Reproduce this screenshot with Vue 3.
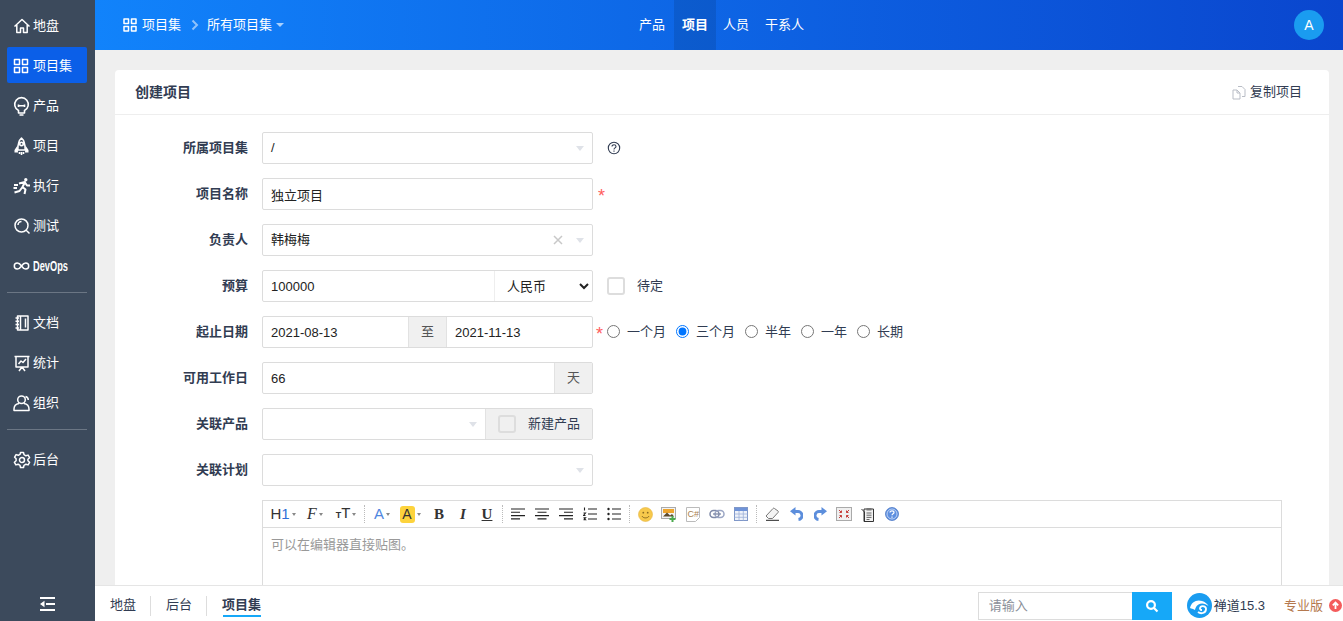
<template>
  <div class="app">
    <aside class="sidebar">
      <template v-for="group in menu" :key="group[0].name">
        <nav class="menu-group">
          <a v-for="item in group" :key="item.name" :class="['menu-item', { active: item.active }]">
            <svg class="menu-icon" viewBox="0 0 18 18">
              <path :d="item.d" :stroke-width="item.sw || 1.5" />
              <path v-if="item.solid" class="solid" :d="item.solid" />
            </svg>
            <span :class="{ devops: item.name === 'DevOps' }">{{ item.name }}</span>
          </a>
        </nav>
        <div v-if="group !== menu[menu.length - 1]" class="menu-divider"></div>
      </template>
      <div class="menu-toggle">
        <svg width="15" height="14" viewBox="0 0 15 14"><path d="M0 0h15v2H0zM6 6h9v2H6zM0 12h15v2H0zM4.500 3.800v6.400L0 7z" /></svg>
      </div>
    </aside>

    <div class="main">
      <header class="topbar">
        <div class="crumbs">
          <svg class="crumb-icon" viewBox="0 0 14 14"><path d="M1 1h4.500v4.500H1zM8.500 1H13v4.500H8.500zM1 8.500h4.500V13H1zM8.500 8.500H13V13H8.500z" /></svg>
          <span>项目集</span>
          <svg class="crumb-sep" width="8" height="12" viewBox="0 0 8 12"><path d="M1.500 1.500L6 6l-4.500 4.500" /></svg>
          <span>所有项目集</span>
          <i class="crumb-caret"></i>
        </div>
        <nav class="topnav">
          <a v-for="tab in tabs" :key="tab" :class="{ on: tab === '项目' }">{{ tab }}</a>
        </nav>
        <div class="avatar">A</div>
      </header>

      <div class="content">
        <section class="card">
          <div class="card-head">
            <strong>创建项目</strong>
            <a class="copy-link">
              <svg width="14" height="15" viewBox="0 0 14 15"><path d="M6 1.500h4l3 3v7h-3M1 5h4l3 3v6H1zM5 5v3h3" /></svg>
              复制项目
            </a>
          </div>

          <div class="form">
            <div class="row">
              <label>所属项目集</label>
              <div class="control select-box"><span>/</span><i class="caret"></i></div>
              <svg class="help" width="14" height="14" viewBox="0 0 14 14"><circle cx="7" cy="7" r="5.700" /><path d="M5 5.600C5 4.400 5.900 3.800 7 3.800S9 4.500 9 5.500C9 6.800 7 6.900 7 8.400" /><path d="M7 9.600v1.200" /></svg>
            </div>

            <div class="row">
              <label>项目名称</label>
              <div class="control"><input value="独立项目" /></div>
              <span class="required name-star">*</span>
            </div>

            <div class="row">
              <label>负责人</label>
              <div class="control select-box">
                <span class="val">韩梅梅</span>
                <svg class="clear" width="10" height="10" viewBox="0 0 10 10"><path d="M1 1l8 8M9 1l-8 8" /></svg>
                <i class="caret"></i>
              </div>
            </div>

            <div class="row">
              <label>预算</label>
              <div class="control group">
                <input class="budget" value="100000" />
                <select class="currency"><option>人民币</option></select>
              </div>
              <span class="check pending"><i class="box"></i>待定</span>
            </div>

            <div class="row">
              <label>起止日期</label>
              <div class="control group">
                <input class="date" value="2021-08-13" />
                <span class="addon to">至</span>
                <input class="date" value="2021-11-13" />
              </div>
              <span class="required date-star">*</span>
              <div class="radios">
                <label v-for="p in periods" :key="p">
                  <input type="radio" name="period" :checked="p === '三个月'" />{{ p }}
                </label>
              </div>
            </div>

            <div class="row">
              <label>可用工作日</label>
              <div class="control group">
                <input value="66" />
                <span class="addon day">天</span>
              </div>
            </div>

            <div class="row">
              <label>关联产品</label>
              <div class="control group">
                <div class="select-box inner"><i class="caret"></i></div>
                <span class="addon newprod"><i class="box"></i>新建产品</span>
              </div>
            </div>

            <div class="row">
              <label>关联计划</label>
              <div class="control select-box"><i class="caret"></i></div>
            </div>

            <div class="row editor-row">
              <label></label>
              <div class="editor">
                <div class="toolbar">
                  <span class="tb w32"><b class="tb-h">H<em>1</em></b><i class="mini"></i></span>
                  <span class="tb w32"><b class="tb-f">F</b><i class="mini"></i></span>
                  <span class="tb w30"><b class="tb-t"><small>T</small>T</b><i class="mini"></i></span>
                  <i class="tb-sep"></i>
                  <span class="tb w28"><b class="tb-a">A</b><i class="mini"></i></span>
                  <span class="tb w28 mr3"><b class="tb-hl">A</b><i class="mini"></i></span>
                  <span class="tb"><b class="tb-b">B</b></span>
                  <span class="tb"><b class="tb-i">I</b></span>
                  <span class="tb"><b class="tb-u">U</b></span>
                  <i class="tb-sep"></i>
                  <span class="tb"><svg class="lines" viewBox="0 0 14 12"><path d="M0 1h14M0 4.300h9M0 7.600h14M0 10.900h9" /></svg></span>
                  <span class="tb"><svg class="lines" viewBox="0 0 14 12"><path d="M0 1h14M2.500 4.300h9M0 7.600h14M2.500 10.900h9" /></svg></span>
                  <span class="tb"><svg class="lines" viewBox="0 0 14 12"><path d="M0 1h14M5 4.300h9M0 7.600h14M5 10.900h9" /></svg></span>
                  <span class="tb"><svg class="lines" viewBox="0 0 14 14"><path d="M5 2h9M5 7h9M5 12h9" /><path d="M1.500 .5v3M.5 6h2l-2 2.500h2M.5 10.800h2l-1 1 1 1h-2" stroke-width=".8" /></svg></span>
                  <span class="tb"><svg class="lines" viewBox="0 0 14 14"><path d="M5 2h9M5 7h9M5 12h9" /><circle cx="1.500" cy="2" r="1.200" /><circle cx="1.500" cy="7" r="1.200" /><circle cx="1.500" cy="12" r="1.200" /></svg></span>
                  <i class="tb-sep"></i>
                  <span class="tb">
                    <svg width="15" height="15" viewBox="0 0 15 15"><circle cx="7.500" cy="7.500" r="7" fill="#f7c94c" stroke="#e5b543" stroke-width=".6" /><circle cx="5.300" cy="5.700" r=".9" fill="#8a6a20" /><circle cx="9.700" cy="5.700" r=".9" fill="#8a6a20" /><path d="M4 9c1 2.500 6 2.500 7 0" fill="none" stroke="#8a6a20" /></svg>
                  </span>
                  <span class="tb">
                    <svg width="16" height="15" viewBox="0 0 16 15"><rect x=".5" y=".5" width="14" height="11" fill="#f3f3f3" stroke="#aaa" /><rect x="2" y="2" width="11" height="4" fill="#eda52e" /><path d="M2 9.500L6 5.500l3 3 2-1.500 2 2.500z" fill="#5c4a2c" /><path d="M11.500 9v6M8.500 12h6" stroke="#4daa4f" stroke-width="2" /></svg>
                  </span>
                  <span class="tb">
                    <svg width="14" height="15" viewBox="0 0 14 15"><path d="M.5.500h13v10l-4 4h-9z" fill="#fff" stroke="#bbb" /><text x="1.500" y="9.500" class="csharp">C#</text></svg>
                  </span>
                  <span class="tb">
                    <svg width="16" height="10" viewBox="0 0 16 10"><rect x="1" y="1.500" width="9" height="7" rx="3.500" fill="none" stroke="#7f8aa8" stroke-width="1.500" /><rect x="6" y="1.500" width="9" height="7" rx="3.500" fill="none" stroke="#9ba6c4" stroke-width="1.500" /><path d="M4 5h8" stroke="#7f8aa8" stroke-width="1.300" /></svg>
                  </span>
                  <span class="tb">
                    <svg width="14" height="14" viewBox="0 0 14 14"><rect x=".5" y=".5" width="13" height="13" fill="#eef2fa" stroke="#7f97c8" /><rect x="1" y="1" width="12" height="3" fill="#6f93d8" /><path d="M.5 7h13M.5 10.300h13M5 4v9.500M9.300 4v9.500" stroke="#9cb0d8" stroke-width=".8" /></svg>
                  </span>
                  <i class="tb-sep"></i>
                  <span class="tb">
                    <svg width="15" height="14" viewBox="0 0 15 14"><path d="M1 9l7-7.500c.5-.5 1-.5 1.500 0l3.500 2.500c.5.500.5 1 0 1.500L7.500 11.500H3.500z" fill="#f4f4f4" stroke="#777" /><path d="M1 13.300h13" stroke="#222" /></svg>
                  </span>
                  <span class="tb">
                    <svg width="13" height="15" viewBox="0 0 13 15"><path d="M3.500 4.500H7.500a3.800 3.800 0 0 1 1 8" fill="none" stroke="#5c8edc" stroke-width="3" /><path d="M5.500 0v8.500L0 4.300z" fill="#5c8edc" /></svg>
                  </span>
                  <span class="tb">
                    <svg width="13" height="15" viewBox="0 0 13 15"><path d="M9.500 4.500H5.500a3.800 3.800 0 0 0-1 8" fill="none" stroke="#5c8edc" stroke-width="3" /><path d="M7.500 0v8.500L13 4.300z" fill="#5c8edc" /></svg>
                  </span>
                  <span class="tb">
                    <svg width="16" height="14" viewBox="0 0 16 14"><rect x=".5" y=".5" width="15" height="13" fill="#f0f0f0" stroke="#aaa" /><path d="M3 3l2.500 2.500M13 3l-2.500 2.500M3 11l2.500-2.500M13 11l-2.500-2.500M5.500 3.500v2h-2M10.500 3.500v2h2M5.500 10.500v-2h-2M10.500 10.500v-2h2" fill="none" stroke="#c6403c" /></svg>
                  </span>
                  <span class="tb">
                    <svg width="14" height="15" viewBox="0 0 14 15"><path d="M3 2h9.500v12.500H3z" fill="#f2f2f2" stroke="#333" /><path d="M.5 2l3 3v9" fill="none" stroke="#333" /><path d="M5.500 1h5v2.500h-5z" fill="#777" /><path d="M5.500 6h5M5.500 8.200h5M5.500 10.400h5M5.500 12.500h3" stroke="#444" stroke-width=".8" /></svg>
                  </span>
                  <span class="tb">
                    <svg width="14" height="14" viewBox="0 0 14 14"><circle cx="7" cy="7" r="6.500" fill="#5d8fe0" stroke="#3f6fc0" stroke-width=".7" /><circle cx="7" cy="7" r="5" fill="none" stroke="#d5e2f8" stroke-width=".8" /><path d="M5 5.500C5 4.300 6 3.800 7 3.800S9 4.500 9 5.500C9 6.800 7 6.800 7 8.200M7 9.400v1.400" fill="none" stroke="#fff" stroke-width="1.200" /></svg>
                  </span>
                </div>
                <div class="editor-body">可以在编辑器直接贴图。</div>
              </div>
            </div>
          </div>
        </section>
      </div>

      <footer class="footbar">
        <div class="foot-crumbs">
          <a v-for="c in footLinks" :key="c" :class="{ cur: c === '项目集' }">{{ c }}</a>
        </div>
        <div class="foot-search">
          <input placeholder="请输入" />
          <button>
            <svg width="14" height="14" viewBox="0 0 14 14"><circle cx="6" cy="6" r="3.900" /><path d="M9 9l3.500 3.500" /></svg>
          </button>
        </div>
        <svg class="logo" width="25" height="25" viewBox="0 0 25 25">
          <circle cx="12.500" cy="12.500" r="12.500" fill="#1a9cf0" />
          <path d="M3 15C4 9 10 6 15 8c3 1 5 2.500 6.500 5-3-2.500-7-3.500-10-1.500-2 1.300-3 3-3.500 5.500C6 16 4.500 15.500 3 15z" fill="#fff" />
          <path d="M11 19c3 2.500 7.500 1 8-2.500.4-3-3.500-4.500-5.500-2.500-1.200 1.300-.3 3 1.500 3" fill="none" stroke="#fff" stroke-width="1.800" />
        </svg>
        <span class="version">禅道15.3</span>
        <a class="pro">专业版</a>
        <svg class="pro-up" width="13" height="13" viewBox="0 0 13 13"><circle cx="6.500" cy="6.500" r="6.500" fill="#f45b5b" /><path d="M6.500 10V3.500M3.800 6.300l2.700-2.800 2.700 2.800" fill="none" stroke="#fff" stroke-width="1.800" /></svg>
      </footer>
    </div>
  </div>
</template>

<script setup>
const menu = [
  [
    { name: '地盘', d: 'M1.500 9.500L9 2.500l7.500 7M3.800 8v7.500h3.700v-4.500h3v4.500h3.700V8' },
    { name: '项目集', active: true, d: 'M1.500 2.500h5v5h-5zM9.500 2.500h5v5h-5zM1.500 10.500h5v5h-5zM9.500 10.500h5v5h-5z' },
    { name: '产品', d: 'M5.500 13.500A6.800 6.800 0 1 1 11.500 13.500V16H5.500zM6.500 18h4M5.500 7.500v2.500M11.500 7.500v2.500M5.500 8.800h6', sw: 1.6 },
    { name: '项目', d: 'M8.500 1C5.500 3.500 4.800 7.500 4.800 13h7.400c0-5.500-.7-9.500-3.700-12zM8.500 5.200a1.700 1.700 0 1 0 0 3.400 1.700 1.700 0 0 0 0-3.400zM6.500 15v2M8.500 15v3M10.500 15v2', sw: 1.6, solid: 'M4.500 8.500L1.500 13v2.500h3.500zM12.500 8.500l3 4.500v2.500H12z' },
    { name: '执行', d: 'M6 6.500l6-1.500-2.500 5 3 2.500-1 4.500M9.500 10l-3 4-5 1.500M12 5.500l2 3h3M1 8h4M.5 11h3.500', sw: 2, solid: 'M12.800 1a1.700 1.700 0 1 0 0 3.400 1.700 1.700 0 0 0 0-3.400z' },
    { name: '测试', d: 'M8.500 2a6.500 6.500 0 1 0 0 13 6.500 6.500 0 0 0 0-13zM13 13l3.500 3.500M5 8a3.500 3.500 0 0 1 3.500-3.500' },
    { name: 'DevOps', d: 'M8.500 9C6.700 6.300 5.500 6 4.300 6a3 3 0 0 0 0 6c1.200 0 2.400-.3 4.200-3 1.800-2.700 3-3 4.200-3a3 3 0 0 1 0 6C11.500 12 10.300 11.700 8.500 9z' }
  ],
  [
    { name: '文档', d: 'M4.500 2h10.500v14H4.500zM7.500 2v14M12.500 4.500v9M2.500 4h3.500M2.500 7.300h3.500M2.500 10.600h3.500M2.500 14h3.500' },
    { name: '统计', d: 'M1.500 2.500h15M3 2.500v10.500h12V2.500M6 17l3-4 3 4M5.500 10l2.500-3 2 1.500 3-3.500' },
    { name: '组织', d: 'M8.500 2a3.800 3.800 0 1 0 0 7.600 3.800 3.800 0 0 0 0-7.600zM6 9.500C3.300 10 1 12 1 15v1.500h15V15c0-3-2.300-5-5-5.500M12.500 2.500c2 .5 2.800 2 2.800 3.500' },
  ],
  [
    { name: '后台', d: 'M7.500 1.500h3l.5 2.200 1.900 1.100 2.200-.7 1.500 2.600-1.700 1.500v1.600l1.700 1.500-1.500 2.600-2.200-.7-1.900 1.100-.5 2.200h-3l-.5-2.200-1.900-1.100-2.200.7-1.500-2.600 1.700-1.500V7.700L1.600 6.200l1.500-2.600 2.200.7L7.200 3.200zM9 6.500a2.500 2.500 0 1 0 0 5 2.500 2.500 0 0 0 0-5z' }
  ]
]

const tabs = ['产品', '项目', '人员', '干系人']
const periods = ['一个月', '三个月', '半年', '一年', '长期']
const footLinks = ['地盘', '后台', '项目集']
</script>

<style>
html, body {
  margin: 0;
  height: 100%;
  overflow: hidden;
}
</style>

<style scoped>
.app {
  display: flex;
  height: 100vh;
  font: 13px/18px "Liberation Sans", "Noto Sans CJK SC", sans-serif;
  color: #313c52;
}

.sidebar {
  width: 95px;
  flex-shrink: 0;
  display: flex;
  flex-direction: column;
  padding: 7px 8px 0 7px;
  box-sizing: border-box;
  background: #3c4a5c;
  color: #fff;
}

.menu-group {
  display: flex;
  flex-direction: column;
  gap: 4px;
}

.menu-item {
  display: flex;
  align-items: center;
  gap: 2px;
  height: 36px;
  padding: 2px 0 0 6px;
  box-sizing: border-box;
  border-radius: 2px;
}

.menu-item.active {
  background: #0b5fe8;
}

.menu-icon {
  width: 18px;
  height: 18px;
  flex-shrink: 0;
  overflow: visible;
}

.menu-icon path {
  fill: none;
  stroke: #fff;
  stroke-linejoin: round;
}

.menu-icon path.solid {
  fill: #fff;
  stroke: none;
}

.devops {
  display: inline-block;
  font-size: 14px;
  font-weight: 700;
  transform: scaleX(0.66);
  transform-origin: left center;
}

.menu-divider {
  height: 1px;
  margin: 9px 0 11px;
  background: #6b7684;
}

.menu-toggle {
  margin-top: auto;
  height: 24px;
  display: flex;
  align-items: flex-start;
  justify-content: center;
}

.menu-toggle path {
  fill: #fff;
}

.main {
  flex: 1;
  min-width: 0;
  display: flex;
  flex-direction: column;
}

.topbar {
  height: 50px;
  flex-shrink: 0;
  display: flex;
  align-items: center;
  padding: 0 19px 0 28px;
  background: linear-gradient(90deg, #1183fb, #0a46ce);
  color: #fff;
}

.crumbs {
  width: 508px;
  display: flex;
  align-items: center;
}

.crumb-icon {
  width: 14px;
  height: 14px;
  margin-right: 5px;
}

.crumb-icon path {
  fill: none;
  stroke: #fff;
  stroke-width: 1.5;
  stroke-linejoin: round;
}

.crumb-sep {
  margin: 0 8px 0 10px;
}

.crumb-sep path {
  fill: none;
  stroke: #8fc2fb;
  stroke-width: 2;
}

.crumb-caret {
  margin-left: 4px;
  border: 4px solid transparent;
  border-top: 4px solid #a9d0fc;
  border-bottom: 0;
}

.topnav {
  display: flex;
}

.topnav a {
  padding: 0 8px;
  line-height: 50px;
}

.topnav a.on {
  margin: 0 -1px 0 1px;
  font-weight: 700;
  background: rgba(0, 0, 0, 0.1);
}

.avatar {
  margin-left: auto;
  width: 30px;
  height: 30px;
  border-radius: 50%;
  background: #1a9cf0;
  text-align: center;
  line-height: 30px;
  font-size: 14px;
}

.content {
  flex: 1;
  min-height: 0;
  overflow: hidden;
  padding: 20px 14px 0 20px;
  background: #efefef;
}

.card {
  background: #fff;
  border-radius: 4px 4px 0 0;
  padding-bottom: 40px;
}

.card-head {
  height: 44px;
  display: flex;
  align-items: center;
  justify-content: space-between;
  padding: 0 27px 0 20px;
  border-bottom: 1px solid #eee;
}

.card-head strong {
  font-size: 14px;
}

.copy-link {
  display: flex;
  align-items: center;
  gap: 4px;
}

.copy-link path {
  fill: none;
  stroke: #b9bdc6;
}

.form {
  padding: 17px 47px 0 0;
}

.row {
  display: flex;
  align-items: center;
  height: 32px;
  margin-bottom: 14px;
}

.row > label {
  width: 133px;
  flex-shrink: 0;
  margin-right: 14px;
  text-align: right;
  font-weight: 700;
}

.control {
  width: 331px;
  height: 32px;
  flex-shrink: 0;
  box-sizing: border-box;
  border: 1px solid #dcdcdc;
  border-radius: 2px;
  background: #fff;
  display: flex;
  align-items: center;
}

.control input,
.control select {
  height: 100%;
  box-sizing: border-box;
  border: 0;
  outline: 0;
  padding: 0 8px;
  background: transparent;
  font: inherit;
  color: #222;
  min-width: 0;
}

.control input {
  flex: 1;
}

.select-box {
  padding-left: 8px;
  box-sizing: border-box;
  color: #222;
}

.select-box .val {
  flex: 1;
}

.caret {
  margin-left: auto;
  margin-right: 8px;
  border: 4.500px solid transparent;
  border-top: 5px solid #dfe2e8;
  border-bottom: 0;
}

.clear {
  margin-right: 13px;
}

.clear path {
  stroke: #c8c8c8;
  stroke-width: 1.500;
}

.help {
  margin-left: 14px;
}

.help circle,
.help path {
  fill: none;
  stroke: #313c52;
  stroke-width: 1.100;
}

.required {
  color: #ff5d5d;
  font-size: 18px;
  line-height: 18px;
  padding-top: 3px;
}

.name-star {
  margin-left: 5px;
}

.date-star {
  width: 11px;
  margin-left: 3px;
}

.budget {
  flex: none !important;
  width: 232px;
  border-right: 1px solid #eee !important;
}

.currency {
  flex: 1;
  padding-left: 8px !important;
}

.box {
  width: 18px;
  height: 18px;
  box-sizing: border-box;
  border: 2px solid #ddd;
  border-radius: 3px;
  background: #fff;
  margin-right: 12px;
  flex-shrink: 0;
}

.check {
  display: flex;
  align-items: center;
}

.pending {
  margin-left: 14px;
}

.date {
  width: 145px;
  flex: none !important;
}

.addon {
  height: 100%;
  display: flex;
  align-items: center;
  justify-content: center;
  box-sizing: border-box;
  background: #f0f0f0;
}

.to {
  width: 39px;
  border-left: 1px solid #e2e2e2;
  border-right: 1px solid #e2e2e2;
  color: #555;
}

.day {
  width: 38px;
  border-left: 1px solid #e2e2e2;
  color: #555;
}

.inner {
  width: 222px;
  height: 100%;
  display: flex;
  align-items: center;
}

.newprod {
  flex: 1;
  border-left: 1px solid #e2e2e2;
  justify-content: flex-start;
  padding-left: 12px;
}

.newprod .box {
  margin-right: 12px;
  background: transparent;
}

.radios {
  display: flex;
  gap: 10px;
  padding-bottom: 1px;
}

.radios label {
  display: flex;
  align-items: center;
  gap: 7px;
}

.radios input {
  margin: 0;
  width: 13px;
  height: 13px;
}

.editor-row {
  height: auto;
  align-items: flex-start;
}

.editor {
  flex: 1;
  min-width: 0;
  border: 1px solid #dcdcdc;
}

.toolbar {
  height: 26px;
  display: flex;
  align-items: center;
  padding-left: 4px;
  border-bottom: 1px solid #dcdcdc;
}

.tb {
  width: 24px;
  height: 26px;
  flex-shrink: 0;
  display: flex;
  align-items: center;
  justify-content: center;
  color: #333;
}

.w32 { width: 32px; }
.w30 { width: 30px; }
.w28 { width: 28px; }
.mr3 { margin-right: 3px; }

.tb-sep {
  width: 1px;
  height: 18px;
  margin: 0 3px;
  flex-shrink: 0;
  border-left: 1px dotted #bbb;
  box-sizing: border-box;
}

.mini {
  margin-left: 2px;
  border: 2.500px solid transparent;
  border-top: 3px solid #888;
  border-bottom: 0;
}

.tb b {
  font-weight: 400;
}

.tb-h {
  font-size: 15px;
}

.tb-h em {
  font-style: normal;
  color: #2f6fd8;
}

.tb-f {
  font-family: "Liberation Serif", serif;
  font-style: italic;
  font-size: 16px;
}

.tb-t {
  font-size: 15px;
}

.tb-t small {
  font-size: 9px;
  font-weight: 700;
}

.tb-a {
  font-size: 15px;
  color: #4f86e0;
}

.tb-hl {
  width: 15px;
  height: 17px;
  line-height: 17px;
  text-align: center;
  border-radius: 3px;
  background: #fdd33c;
  font-size: 14px;
}

.tb .tb-b {
  font: 700 15px "Liberation Serif", serif;
}

.tb .tb-i {
  font: italic 700 15px "Liberation Serif", serif;
}

.tb .tb-u {
  font: 700 15px "Liberation Serif", serif;
  text-decoration: underline;
}

.csharp {
  font: 400 9px "Liberation Sans", sans-serif;
  fill: #a8824f;
}

.lines {
  width: 14px;
  height: 14px;
}

.lines path {
  fill: none;
  stroke: #222;
  stroke-width: 1.100;
}

.lines circle {
  fill: #222;
}

.editor-body {
  height: 150px;
  padding: 8px;
  color: #999;
}

.footbar {
  height: 36px;
  flex-shrink: 0;
  display: flex;
  align-items: center;
  padding: 4px 1px 0 0;
  box-sizing: border-box;
  border-top: 1px solid #e5e5e5;
  background: #fff;
}

.foot-crumbs {
  display: flex;
  align-items: center;
  padding-left: 15px;
  margin-right: auto;
}

.foot-crumbs a {
  position: relative;
  padding-bottom: 2px;
}

.foot-crumbs a + a {
  margin-left: 14px;
  padding-left: 15px;
  border-left: 1px solid #ddd;
}

.foot-crumbs a.cur {
  font-weight: 700;
}

.foot-crumbs a.cur::after {
  content: "";
  position: absolute;
  left: 16px;
  right: 0;
  bottom: -1px;
  height: 2px;
  background: #16a8f8;
}

.foot-search {
  display: flex;
  width: 194px;
  height: 28px;
}

.foot-search input {
  flex: 1;
  min-width: 0;
  box-sizing: border-box;
  border: 1px solid #dcdcdc;
  border-right: 0;
  outline: 0;
  padding: 0 10px;
  font: inherit;
}

.foot-search input::placeholder {
  color: #8a8f99;
}

.foot-search button {
  width: 40px;
  border: 0;
  padding: 0;
  background: #16a8f8;
  display: flex;
  align-items: center;
  justify-content: center;
}

.foot-search circle,
.foot-search path {
  fill: none;
  stroke: #fff;
  stroke-width: 2.200;
}

.logo {
  margin-left: 15px;
}

.version {
  margin-left: 2px;
}

.pro {
  margin-left: 19px;
  color: #b5794f;
}

.pro-up {
  margin-left: 6px;
}
</style>
